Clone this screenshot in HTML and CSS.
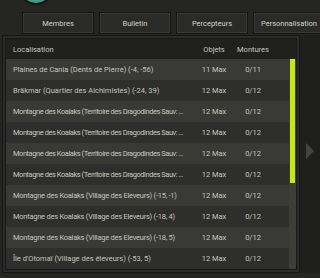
FILE: index.html
```html
<!DOCTYPE html>
<html lang="fr">
<head>
  <meta charset="UTF-8">
  <meta name="viewport" content="width=device-width, initial-scale=1.0">
  <title>Guilde - Enclos</title>
  <link rel="stylesheet" href="styles.css">
</head>
<body>

  <!-- Emblem -->
  <div class="top">
    <div class="emblem"></div>
  </div>

  <!-- Tabs -->
  <div class="tabs">
    <div class="tab">Membres</div>
    <div class="tab">Bulletin</div>
    <div class="tab">Percepteurs</div>
    <div class="tab">Personnalisation</div>
  </div>

  <div class="main">
    <div class="panel">
      <div class="panel-inner">
        <div class="row head">
          <div class="loc">Localisation</div>
          <div class="num">Objets</div>
          <div class="num wide">Montures</div>
        </div>
        <div class="body">
          <div class="rows">
            <div class="row"><div class="loc">Plaines de Cania (Dents de Pierre) (-4, -56)</div><div class="num">11 Max</div><div class="num wide">0/11</div></div>
            <div class="row"><div class="loc">Bräkmar (Quartier des Alchimistes) (-24, 39)</div><div class="num">12 Max</div><div class="num wide">0/12</div></div>
            <div class="row"><div class="loc tighter">Montagne des Koalaks (Territoire des Dragodindes Sauv: ...</div><div class="num">12 Max</div><div class="num wide">0/12</div></div>
            <div class="row"><div class="loc tighter">Montagne des Koalaks (Territoire des Dragodindes Sauv: ...</div><div class="num">12 Max</div><div class="num wide">0/12</div></div>
            <div class="row"><div class="loc tighter">Montagne des Koalaks (Territoire des Dragodindes Sauv: ...</div><div class="num">12 Max</div><div class="num wide">0/12</div></div>
            <div class="row"><div class="loc tighter">Montagne des Koalaks (Territoire des Dragodindes Sauv: ...</div><div class="num">12 Max</div><div class="num wide">0/12</div></div>
            <div class="row"><div class="loc tight">Montagne des Koalaks (Village des Eleveurs) (-15, -1)</div><div class="num">12 Max</div><div class="num wide">0/12</div></div>
            <div class="row"><div class="loc tight">Montagne des Koalaks (Village des Eleveurs) (-18, 4)</div><div class="num">12 Max</div><div class="num wide">0/12</div></div>
            <div class="row"><div class="loc tight">Montagne des Koalaks (Village des Eleveurs) (-18, 5)</div><div class="num">12 Max</div><div class="num wide">0/12</div></div>
            <div class="row"><div class="loc">Île d'Otomaï (Village des éleveurs) (-53, 5)</div><div class="num">12 Max</div><div class="num wide">0/12</div></div>
          </div>
          <div class="scrollbar">
            <div class="thumb"></div>
          </div>
        </div>
      </div>
    </div>
    <div class="side">
      <div class="arrow"></div>
    </div>
  </div>

</body>
</html>
```

FILE: styles.css
```css
/* Basic Reset */
* {
  margin: 0;
  padding: 0;
  box-sizing: border-box;
}

body {
  width: 320px;
  height: 278px;
  overflow: hidden;
  background-color: #252523;
  font-family: 'Roboto', sans-serif;
  font-size: 7.5px;
  color: #c6c6be;
}

/* Emblem */
.top {
  display: flex;
  height: 12px;
  padding-left: 18px;
}

.emblem {
  flex: 0 0 36px;
  height: 36px;
  margin-top: -31px;
  border-radius: 50%;
  background-color: #3c9c88;
  border: 2px solid #141413;
}

/* Tabs */
.tabs {
  display: flex;
  gap: 5px;
  height: 22px;
  padding-left: 22px;
  white-space: nowrap;
}

.tab {
  flex: 0 0 72px;
  display: flex;
  justify-content: center;
  align-items: center;
  background-color: #2a2a28;
  border: 1px solid #141413;
  box-shadow: inset 0 0 0 1px #393936;
  color: #d2d2cb;
}

/* Main area */
.main {
  display: flex;
  margin-top: 1px;
  height: 238px;
}

.panel {
  width: 298px;
  margin-left: 2px;
  border: 1px solid #151514;
  padding: 2px;
  background-color: #2b2b29;
}

.panel-inner {
  height: 100%;
  border: 1px solid #171716;
  display: flex;
  flex-direction: column;
}

.row {
  display: flex;
  align-items: center;
  height: 21px;
}

.row:nth-child(odd) {
  background-color: #393936;
}

.row:nth-child(even) {
  background-color: #2e2e2c;
}

.row.head {
  background-color: #20201e;
  height: 20px;
}

.loc {
  width: 189px;
  padding-left: 7px;
  padding-right: 2px;
  white-space: nowrap;
  overflow: hidden;
  text-overflow: ellipsis;
}

.loc.tight {
  letter-spacing: -0.25px;
}

.loc.tighter {
  letter-spacing: -0.45px;
}

.num {
  width: 38px;
  text-align: center;
}

.num.wide {
  width: 40px;
}

.body {
  display: flex;
  flex: 1;
  min-height: 0;
  overflow: hidden;
}

.rows {
  flex: 1;
}

/* Scrollbar */
.scrollbar {
  width: 7px;
  background-color: #3d3d3a;
  padding: 0 1px;
}

.thumb {
  height: 124px;
  background-color: #c4ec00;
}

/* Side arrow */
.side {
  flex: 1;
  display: flex;
  align-items: center;
  justify-content: center;
  background-color: #1f1f1d;
  padding-bottom: 6px;
}

.arrow {
  width: 0;
  height: 0;
  border-top: 8px solid transparent;
  border-bottom: 8px solid transparent;
  border-left: 8px solid #44443f;
}
```
